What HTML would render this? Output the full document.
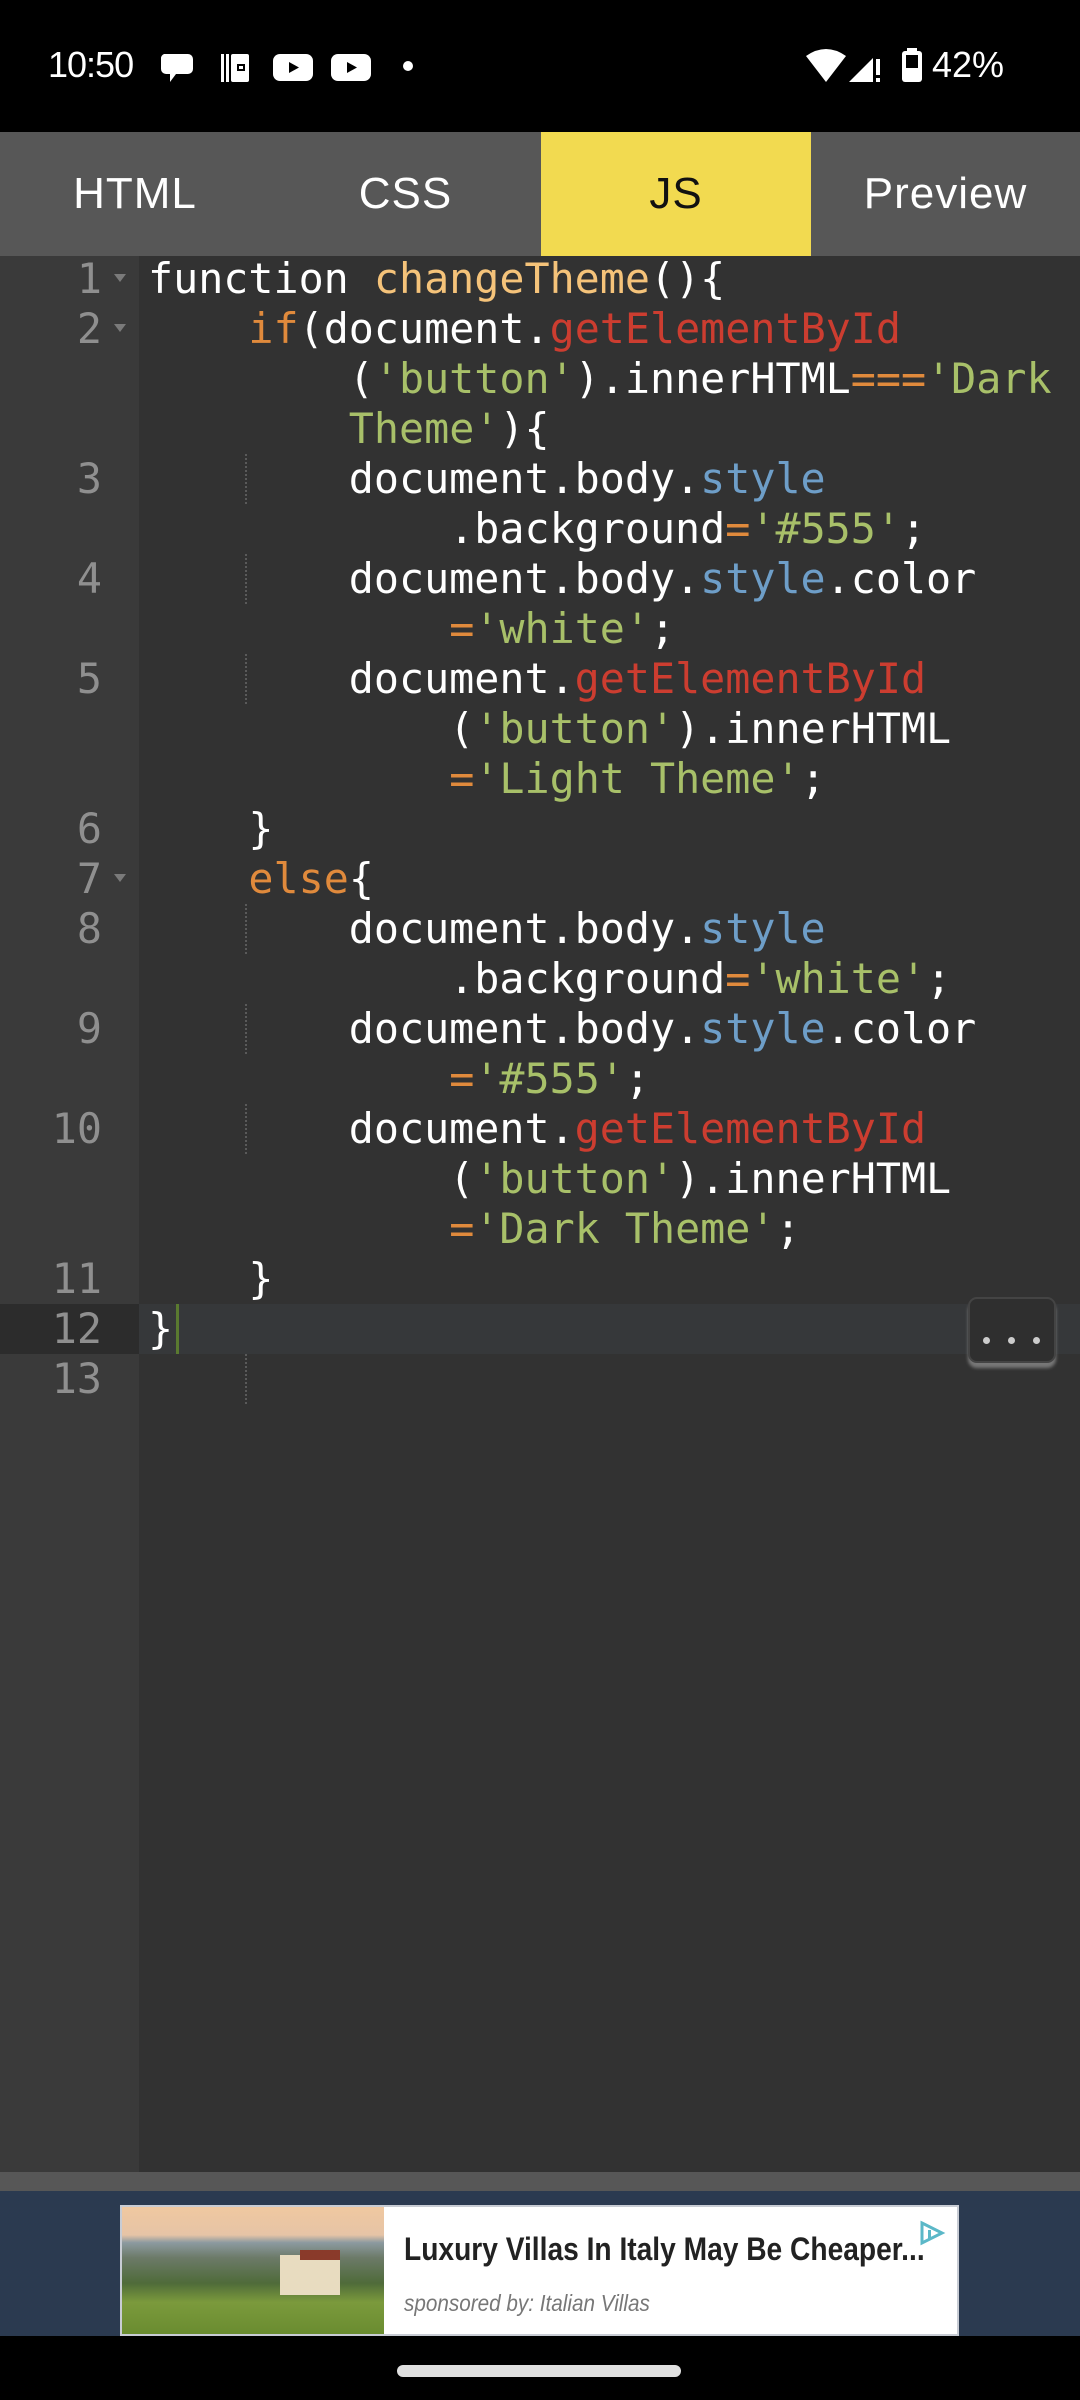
<!DOCTYPE html>
<html><head><meta charset="utf-8"><style>
*{margin:0;padding:0;box-sizing:border-box}
body{width:1080px;height:2400px;background:#000;position:relative;overflow:hidden;font-family:"Liberation Sans",sans-serif}
.abs{position:absolute}
#tabs{top:132px;left:0;width:1080px;height:124px;background:#575757}
.tab{position:absolute;top:0;height:124px;line-height:124px;text-align:center;color:#fff;font-size:44px;letter-spacing:1px;font-family:"Liberation Sans",sans-serif}
#editor{top:256px;left:0;width:1080px;height:1916px;background:#323232}
#gutter{top:256px;left:0;width:139px;height:1916px;background:#3a3a3a}
.row{position:absolute;left:0;width:1080px;height:50px;line-height:50px;font-family:"DejaVu Sans Mono","Liberation Mono",monospace;font-size:41.7px;color:#fff;white-space:pre}
.ln{position:absolute;right:978px;color:#8f8f8f;text-align:right}
.fold{position:absolute;left:114px;top:20px;width:0;height:0;border-left:6px solid transparent;border-right:6px solid transparent;border-top:8px solid #7a7a7a}
.c{position:absolute;left:148px}
.k{color:#e08a3c}.f{color:#f5c37a}.r{color:#cc3d30}.b{color:#6e9ec8}.g{color:#a8c069}
.guide{position:absolute;left:245px;top:0;width:0;height:50px;border-left:2px dotted #5a5a5a}
</style></head><body>
<!-- status bar -->
<div class="abs" style="left:48px;top:44px;color:#fff;font-size:36px;letter-spacing:-1px">10:50</div>
<svg class="abs" style="left:160px;top:52px" width="34" height="32" viewBox="0 0 34 32"><path d="M4 2h24a5 5 0 0 1 5 5v10a5 5 0 0 1-5 5H16l-6 8v-8H6a5 5 0 0 1-5-5V7a5 5 0 0 1 3-5z" fill="#fff"/></svg>
<svg class="abs" style="left:221px;top:54px" width="30" height="28"><rect x="0" y="0" width="3" height="28" fill="#fff"/><rect x="5" y="0" width="3" height="28" fill="#fff"/><rect x="10" y="0" width="18" height="28" rx="2" fill="#fff"/><rect x="16" y="10" width="8" height="7" fill="#000"/><rect x="18" y="12" width="4" height="3" fill="#fff"/></svg>
<svg class="abs" style="left:273px;top:54px" width="40" height="27"><rect width="40" height="27" rx="7" fill="#fff"/><path d="M16 8l10 5.5-10 5.5z" fill="#000"/></svg>
<svg class="abs" style="left:331px;top:54px" width="40" height="27"><rect width="40" height="27" rx="7" fill="#fff"/><path d="M16 8l10 5.5-10 5.5z" fill="#000"/></svg>
<div class="abs" style="left:403px;top:61px;width:10px;height:10px;border-radius:5px;background:#fff"></div>
<svg class="abs" style="left:806px;top:48px" width="40" height="34"><path d="M0 8Q20 -6 40 8L20 34z" fill="#fff"/></svg>
<svg class="abs" style="left:849px;top:49px" width="34" height="34"><path d="M0 33L24 9V33z" fill="#fff"/><rect x="27" y="10" width="4" height="16" fill="#fff"/><rect x="27" y="29" width="4" height="4" fill="#fff"/></svg>
<svg class="abs" style="left:901px;top:48px" width="22" height="34"><rect x="6" y="0" width="10" height="4" fill="#fff"/><rect x="1" y="3" width="20" height="31" rx="3" fill="#fff"/><rect x="5" y="7" width="12" height="13" fill="#000"/></svg>
<div class="abs" style="left:932px;top:44px;color:#fff;font-size:36px">42%</div>

<div id="tabs" class="abs">
<div class="tab" style="left:0;width:270px">HTML</div>
<div class="tab" style="left:270px;width:271px">CSS</div>
<div class="tab" style="left:541px;width:270px;background:#f2da50;color:#111">JS</div>
<div class="tab" style="left:811px;width:269px">Preview</div>
</div>
<div id="editor" class="abs"></div>
<div id="gutter" class="abs"></div>
<!-- active line -->
<div class="abs" style="left:0;top:1304px;width:139px;height:50px;background:#2c2c2c"></div>
<div class="abs" style="left:139px;top:1304px;width:941px;height:50px;background:#36383a"></div>
<div class="abs" style="left:176px;top:1304px;width:3px;height:50px;background:#5a7a30"></div>

<div class="row" style="top:254px"><span class="ln">1</span><span class="fold"></span><span class="c">function <span class="f">changeTheme</span>(){</span></div>
<div class="row" style="top:304px"><span class="ln">2</span><span class="fold"></span><span class="c">    <span class="k">if</span>(document.<span class="r">getElementById</span></span></div>
<div class="row" style="top:354px"><span class="c">        (<span class="g">'button'</span>).innerHTML<span class="k">===</span><span class="g">'Dark</span></span></div>
<div class="row" style="top:404px"><span class="c">        <span class="g">Theme'</span>){</span></div>
<div class="row" style="top:454px"><span class="ln">3</span><span class="guide"></span><span class="c">        document.body.<span class="b">style</span></span></div>
<div class="row" style="top:504px"><span class="c">            .background<span class="k">=</span><span class="g">'#555'</span>;</span></div>
<div class="row" style="top:554px"><span class="ln">4</span><span class="guide"></span><span class="c">        document.body.<span class="b">style</span>.color</span></div>
<div class="row" style="top:604px"><span class="c">            <span class="k">=</span><span class="g">'white'</span>;</span></div>
<div class="row" style="top:654px"><span class="ln">5</span><span class="guide"></span><span class="c">        document.<span class="r">getElementById</span></span></div>
<div class="row" style="top:704px"><span class="c">            (<span class="g">'button'</span>).innerHTML</span></div>
<div class="row" style="top:754px"><span class="c">            <span class="k">=</span><span class="g">'Light Theme'</span>;</span></div>
<div class="row" style="top:804px"><span class="ln">6</span><span class="c">    }</span></div>
<div class="row" style="top:854px"><span class="ln">7</span><span class="fold"></span><span class="c">    <span class="k">else</span>{</span></div>
<div class="row" style="top:904px"><span class="ln">8</span><span class="guide"></span><span class="c">        document.body.<span class="b">style</span></span></div>
<div class="row" style="top:954px"><span class="c">            .background<span class="k">=</span><span class="g">'white'</span>;</span></div>
<div class="row" style="top:1004px"><span class="ln">9</span><span class="guide"></span><span class="c">        document.body.<span class="b">style</span>.color</span></div>
<div class="row" style="top:1054px"><span class="c">            <span class="k">=</span><span class="g">'#555'</span>;</span></div>
<div class="row" style="top:1104px"><span class="ln">10</span><span class="guide"></span><span class="c">        document.<span class="r">getElementById</span></span></div>
<div class="row" style="top:1154px"><span class="c">            (<span class="g">'button'</span>).innerHTML</span></div>
<div class="row" style="top:1204px"><span class="c">            <span class="k">=</span><span class="g">'Dark Theme'</span>;</span></div>
<div class="row" style="top:1254px"><span class="ln">11</span><span class="c">    }</span></div>
<div class="row" style="top:1304px"><span class="ln">12</span><span class="c">}</span></div>
<div class="row" style="top:1354px"><span class="ln">13</span><span class="guide"></span></div>

<!-- dots button -->
<div class="abs" style="left:968px;top:1297px;width:88px;height:66px;border-radius:9px;background:#2f2f2f;border:2px solid #444;box-shadow:0 5px 3px #777"></div>
<div class="abs" style="left:983px;top:1337px;width:7px;height:7px;border-radius:4px;background:#ccc"></div>
<div class="abs" style="left:1008px;top:1337px;width:7px;height:7px;border-radius:4px;background:#ccc"></div>
<div class="abs" style="left:1033px;top:1337px;width:7px;height:7px;border-radius:4px;background:#ccc"></div>

<!-- bottom -->
<div class="abs" style="left:0;top:2172px;width:1080px;height:19px;background:#575757"></div>
<div class="abs" style="left:0;top:2191px;width:1080px;height:145px;background:#2b3a50"></div>
<div class="abs" style="left:120px;top:2205px;width:839px;height:131px;background:#fff;border:2px solid #c8ccd4"></div>
<div class="abs" style="left:122px;top:2207px;width:262px;height:127px;background:linear-gradient(180deg,#f0c8a0 0%,#e6c4a6 22%,#8c9aa0 28%,#6c7a68 40%,#4f6b3a 60%,#7b9a3c 75%,#6a8c30 100%)"></div>
<div class="abs" style="left:280px;top:2255px;width:60px;height:40px;background:#e8dcc0"></div>
<div class="abs" style="left:300px;top:2250px;width:40px;height:10px;background:#8a3a2a"></div>
<div class="abs" style="left:404px;top:2231px;font-size:32px;font-weight:bold;color:#222;white-space:nowrap;transform:scaleX(0.88);transform-origin:left">Luxury Villas In Italy May Be Cheaper...</div>
<div class="abs" style="left:404px;top:2290px;font-size:23px;font-style:italic;color:#777;white-space:nowrap;transform:scaleX(0.9);transform-origin:left">sponsored by: Italian Villas</div>
<svg class="abs" style="left:918px;top:2220px" width="28" height="26"><path d="M4 3L24 13L4 23z" fill="none" stroke="#5bb8c8" stroke-width="3"/><rect x="10" y="10" width="3" height="9" fill="#5bb8c8"/></svg>
<div class="abs" style="left:397px;top:2365px;width:284px;height:12px;border-radius:6px;background:#e0e0e0"></div>
</body></html>
